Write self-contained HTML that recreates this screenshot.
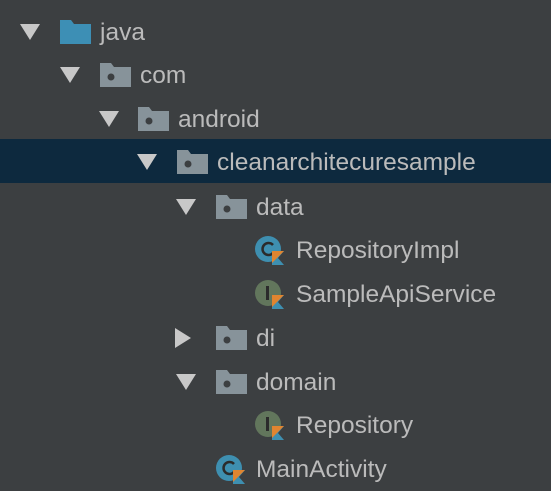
<!DOCTYPE html>
<html><head><meta charset="utf-8"><style>
html,body{margin:0;padding:0;background:#3c3f41;width:551px;height:491px;overflow:hidden;position:relative;font-family:"Liberation Sans",sans-serif;}
.sel{position:absolute;left:0;top:139px;width:551px;height:44px;background:#0d293e;}
.r{position:absolute;height:0;}
.t{position:absolute;color:#bbbbbb;font-size:24.5px;line-height:24px;top:-11px;white-space:nowrap;}
svg{position:absolute;}
</style></head><body>
<div class="sel"></div>
<svg width="0" height="0" style="position:absolute">
<defs>
<symbol id="dn" viewBox="0 0 20 16"><polygon points="0,0 20,0 10,16" fill="#c8c8c8"/></symbol>
<symbol id="rt" viewBox="0 0 16 20"><polygon points="0,0 16,10 0,20" fill="#c8c8c8"/></symbol>
<symbol id="fd" viewBox="0 0 31 24"><path d="M0 0H11L14 4H31V24H0Z" fill="#87939a"/><circle cx="11" cy="14" r="3.5" fill="#3c3f41"/></symbol>
<symbol id="fj" viewBox="0 0 31 24"><path d="M0 0H11L14 4H31V24H0Z" fill="#3d8fb5"/></symbol>
<symbol id="cc" viewBox="0 0 34 30"><circle cx="14" cy="14" r="13" fill="#3e8fb0"/><path d="M19 10a6 6 0 1 0 0 8" stroke="#2b2b2b" stroke-width="2.5" fill="none"/><polygon points="18,16 30,16 24,23 30,30 18,30" fill="#3e8fb0"/><polygon points="18,16 30,16 18,28" fill="#e08530"/></symbol>
<symbol id="ci" viewBox="0 0 34 30"><circle cx="14" cy="14" r="13" fill="#62765c"/><rect x="12" y="7" width="3" height="14" fill="#2b2b2b"/><polygon points="18,16 30,16 24,23 30,30 18,30" fill="#3e8fb0"/><polygon points="18,16 30,16 18,28" fill="#e08530"/></symbol>
</defs></svg>

<svg style="left:20px;top:24px" width="20" height="16"><use href="#dn"/></svg>
<svg style="left:60px;top:20px" width="31" height="24"><use href="#fj"/></svg>
<div class="r" style="top:32px"><span class="t" style="left:100px">java</span></div>

<svg style="left:60px;top:67px" width="20" height="16"><use href="#dn"/></svg>
<svg style="left:100px;top:63px" width="31" height="24"><use href="#fd"/></svg>
<div class="r" style="top:75px"><span class="t" style="left:140px">com</span></div>

<svg style="left:99px;top:111px" width="20" height="16"><use href="#dn"/></svg>
<svg style="left:138px;top:107px" width="31" height="24"><use href="#fd"/></svg>
<div class="r" style="top:119px"><span class="t" style="left:178px">android</span></div>

<svg style="left:137px;top:154px" width="20" height="16"><use href="#dn"/></svg>
<svg style="left:177px;top:150px" width="31" height="24"><use href="#fd"/></svg>
<div class="r" style="top:162px"><span class="t" style="left:217px">cleanarchitecuresample</span></div>

<svg style="left:176px;top:199px" width="20" height="16"><use href="#dn"/></svg>
<svg style="left:216px;top:195px" width="31" height="24"><use href="#fd"/></svg>
<div class="r" style="top:207px"><span class="t" style="left:256px">data</span></div>

<svg style="left:254px;top:235px" width="34" height="30"><use href="#cc"/></svg>
<div class="r" style="top:250px"><span class="t" style="left:296px">RepositoryImpl</span></div>

<svg style="left:254px;top:279px" width="34" height="30"><use href="#ci"/></svg>
<div class="r" style="top:294px"><span class="t" style="left:296px">SampleApiService</span></div>

<svg style="left:175px;top:328px" width="16" height="20"><use href="#rt"/></svg>
<svg style="left:216px;top:326px" width="31" height="24"><use href="#fd"/></svg>
<div class="r" style="top:338px"><span class="t" style="left:256px">di</span></div>

<svg style="left:176px;top:374px" width="20" height="16"><use href="#dn"/></svg>
<svg style="left:216px;top:370px" width="31" height="24"><use href="#fd"/></svg>
<div class="r" style="top:382px"><span class="t" style="left:256px">domain</span></div>

<svg style="left:254px;top:410px" width="34" height="30"><use href="#ci"/></svg>
<div class="r" style="top:425px"><span class="t" style="left:296px">Repository</span></div>

<svg style="left:215px;top:454px" width="34" height="30"><use href="#cc"/></svg>
<div class="r" style="top:469px"><span class="t" style="left:256px">MainActivity</span></div>
</body></html>
